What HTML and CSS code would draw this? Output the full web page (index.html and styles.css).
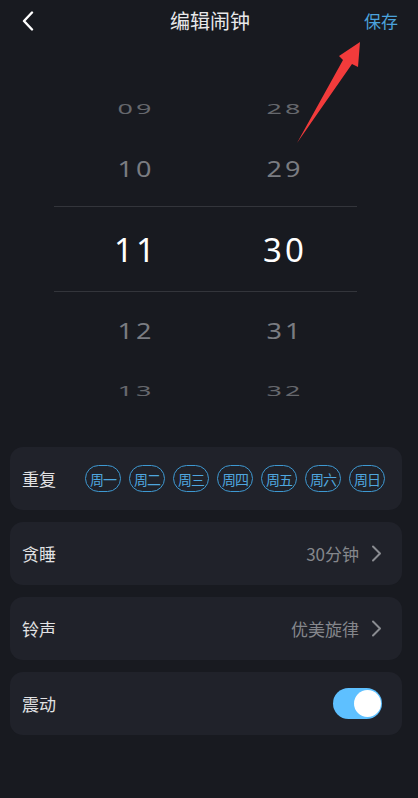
FILE: index.html
```html
<!DOCTYPE html>
<html>
<head>
    <meta charset="utf-8">
    <link rel="stylesheet" href="styles.css">
</head>
<body>
    <div class="screen">
        <header class="topbar">
            <span class="back">
                <svg width="12" height="20" viewBox="0 0 12 20"><path d="M10 1.5 L2 10 L10 18.5" fill="none" stroke="#ffffff" stroke-width="2.4" stroke-linecap="round" stroke-linejoin="round"/></svg>
            </span>
            <h1 class="title">编辑闹钟</h1>
            <span class="save">保存</span>
        </header>

        <section class="picker">
            <div class="wheel-row far top"><span>09</span><span>28</span></div>
            <div class="wheel-row near above"><span>10</span><span>29</span></div>
            <div class="wheel-row current"><span>11</span><span>30</span></div>
            <div class="wheel-row near below"><span>12</span><span>31</span></div>
            <div class="wheel-row far bottom"><span>13</span><span>32</span></div>
        </section>

        <section class="settings">
            <div class="setting-card">
                <span class="setting-label">重复</span>
                <div class="days">
                    <span class="day">周一</span>
                    <span class="day">周二</span>
                    <span class="day">周三</span>
                    <span class="day">周四</span>
                    <span class="day">周五</span>
                    <span class="day">周六</span>
                    <span class="day">周日</span>
                </div>
            </div>
            <div class="setting-card">
                <span class="setting-label">贪睡</span>
                <span class="setting-value">30分钟</span>
                <svg class="chevron" width="11" height="17" viewBox="0 0 11 17"><path d="M2 1.5 L9 8.5 L2 15.5" fill="none" stroke="#8a8c91" stroke-width="2" stroke-linecap="round" stroke-linejoin="round"/></svg>
            </div>
            <div class="setting-card">
                <span class="setting-label">铃声</span>
                <span class="setting-value">优美旋律</span>
                <svg class="chevron" width="11" height="17" viewBox="0 0 11 17"><path d="M2 1.5 L9 8.5 L2 15.5" fill="none" stroke="#8a8c91" stroke-width="2" stroke-linecap="round" stroke-linejoin="round"/></svg>
            </div>
            <div class="setting-card">
                <span class="setting-label">震动</span>
                <span class="toggle on"><span class="knob"></span></span>
            </div>
        </section>

        <!-- red pointer arrow drawn over the screenshot -->
        <svg class="annotation" width="418" height="798" viewBox="0 0 418 798">
            <polygon points="297,143 343,60 339,56 360,42 358,67 352,64" fill="#f23b3b"/>
        </svg>
    </div>
</body>
</html>
```

FILE: styles.css
```css
* {
    box-sizing: border-box;
}

html, body {
    margin: 0;
    padding: 0;
    background: #181a20;
}

body {
    font-family: "Noto Sans CJK SC", "Noto Sans", sans-serif;
    color: #e4e4e6;
}

.screen {
    position: relative;
    width: 418px;
    height: 798px;
    padding: 0 16px 0 10px;
    overflow: hidden;
}

.topbar {
    display: grid;
    grid-template-columns: 1fr auto 1fr;
    align-items: center;
    height: 41px;
    padding: 0 4px 0 12px;
}

.back {
    display: flex;
    align-items: center;
}

.title {
    margin: 0;
    font-size: 20px;
    font-weight: normal;
    color: #e8e8ea;
    line-height: 1;
}

.save {
    justify-self: end;
    font-size: 17px;
    color: #4ba2dc;
    line-height: 1;
}

.picker {
    width: 303px;
    margin: 37px 0 0 44px;
    font-family: "Noto Sans", "DejaVu Sans", sans-serif;
}

.wheel-row {
    display: grid;
    grid-template-columns: 149px 149px;
    padding-left: 6px;
    align-items: center;
    justify-items: center;
    line-height: 1;
}

.wheel-row span {
    display: block;
    letter-spacing: 3px;
    padding-left: 3px;
}

.wheel-row.far {
    height: 60px;
    font-size: 27px;
    color: #66686d;
}

.wheel-row.far span {
    transform: scaleY(0.52);
}

.wheel-row.near {
    height: 68px;
    font-size: 27px;
    color: #7a7c81;
}

.wheel-row.near span {
    transform: scaleY(0.83);
}

.wheel-row.above {
    padding-bottom: 8px;
}

.wheel-row.below {
    padding-top: 8px;
}

.wheel-row.current {
    height: 86px;
    font-size: 33px;
    color: #ffffff;
    border-top: 1px solid #33353b;
    border-bottom: 1px solid #33353b;
}

.settings {
    display: flex;
    flex-direction: column;
    gap: 12px;
    margin-top: 27px;
}

.setting-card {
    display: flex;
    align-items: center;
    height: 63px;
    padding: 0 16px 0 12px;
    background: #20222a;
    border-radius: 13px;
}

.setting-label {
    flex: none;
    white-space: nowrap;
    font-size: 17px;
    color: #e2e2e4;
}

.days {
    display: flex;
    flex: none;
    gap: 8px;
    margin-left: 29px;
}

.day {
    display: flex;
    flex: none;
    align-items: center;
    justify-content: center;
    width: 36px;
    height: 27px;
    border: 1.5px solid #3e99d2;
    border-radius: 14px;
    font-size: 14px;
    letter-spacing: -1px;
    color: #4fa6de;
}

.setting-value {
    margin-left: auto;
    margin-right: 12px;
    font-size: 17px;
    color: #85878c;
}

.chevron {
    display: block;
    margin-right: 4px;
}

.toggle {
    position: relative;
    margin-left: auto;
    margin-right: 4px;
    width: 49px;
    height: 31px;
    border-radius: 16px;
    background: #5ec0ff;
}

.toggle .knob {
    position: absolute;
    top: 2px;
    right: 1px;
    width: 27px;
    height: 27px;
    border-radius: 50%;
    background: #ffffff;
}

.annotation {
    position: absolute;
    top: 0;
    left: 0;
    pointer-events: none;
}
```
